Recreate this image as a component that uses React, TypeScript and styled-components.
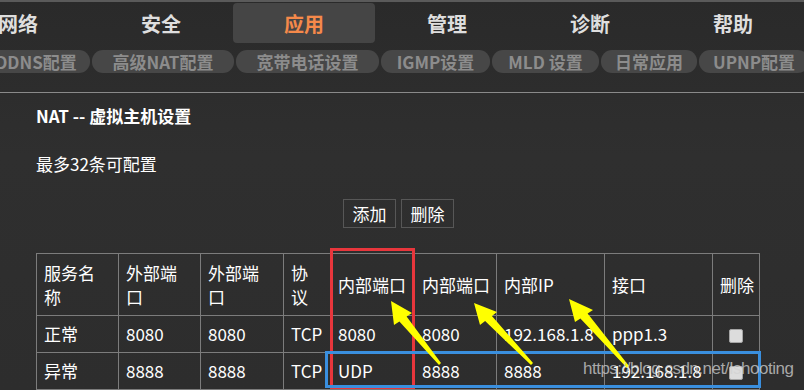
import React from 'react';
import styled, { createGlobalStyle } from 'styled-components';

const GlobalStyle = createGlobalStyle`
  html, body {
    margin: 0;
    padding: 0;
    background: #2d2d2d;
    overflow: hidden;
  }
  body {
    font-family: 'Noto Sans CJK SC', 'Noto Sans', sans-serif;
    color: #fff;
  }
`;

const Page = styled.div`
  position: relative;
  width: 804px;
  height: 390px;
  overflow: hidden;
  background: linear-gradient(180deg, #2a2a2a 0%, #2f2f2f 40%, #2d2d2d 100%);
`;

const TopLine = styled.div`
  height: 2px;
  background: #5a5a5a;
`;

const NavBar = styled.div`
  display: flex;
  height: 40px;
  margin-left: -53px;
  padding-top: 1px;
`;

const NavItem = styled.div<{ $active?: boolean }>`
  width: 142px;
  margin-right: 1px;
  flex: none;
  display: flex;
  align-items: center;
  justify-content: center;
  font-size: 20px;
  font-weight: 700;
  color: ${p => (p.$active ? '#f5894a' : '#dedede')};
  background: ${p => (p.$active ? '#454545' : 'transparent')};
  border-radius: 4px;
`;

const SubNav = styled.div`
  display: flex;
  gap: 2px;
  margin-top: 7px;
  margin-left: -18px;
  height: 23px;
`;

const Pill = styled.div<{ $w: number }>`
  width: ${p => p.$w}px;
  flex: none;
  display: flex;
  align-items: center;
  justify-content: center;
  background: #474747;
  border-radius: 11px;
  color: #8c8c8c;
  font-size: 17px;
  font-weight: 700;
  white-space: nowrap;
`;

const Divider = styled.div`
  margin-top: 19px;
  height: 1px;
  background: #8a8a8a;
`;

const Content = styled.div`
  padding: 0 0 0 36px;
`;

const Title = styled.div`
  margin-top: 11px;
  font-size: 17px;
  font-weight: 700;
  line-height: 24px;
`;

const Note = styled.div`
  margin-top: 24px;
  font-size: 17px;
  line-height: 24px;
`;

const ButtonRow = styled.div`
  display: flex;
  gap: 5px;
  padding-left: 307px;
  margin-top: 23px;
`;

const Btn = styled.button`
  width: 53px;
  height: 29px;
  padding: 0;
  background: transparent;
  border: 1px solid #575757;
  color: #fff;
  font-family: 'Noto Sans CJK SC', sans-serif;
  font-size: 17px;
  line-height: 27px;
`;

const Table = styled.table`
  margin-top: 25px;
  border-collapse: collapse;
  table-layout: fixed;
  width: 724px;
  font-size: 17px;
  color: #fff;
`;

const Th = styled.th<{ $w: number }>`
  width: ${p => p.$w - 8}px;
  height: 61px;
  padding: 0 0 0 7px;
  border: 1px solid #7c7c7c;
  text-align: left;
  font-weight: 400;
  line-height: 24px;
  vertical-align: middle;
`;

const Td = styled.td<{ $center?: boolean }>`
  height: 36px;
  padding: 0 0 0 7px;
  border: 1px solid #7c7c7c;
  line-height: 24px;
  white-space: nowrap;
  overflow: visible;
  text-align: ${p => (p.$center ? 'center' : 'left')};
`;

const Check = styled.span`
  display: inline-block;
  width: 12px;
  height: 12px;
  margin-left: -7px;
  vertical-align: middle;
  background: #dcdcdc;
  border: 1px solid #a5a5a5;
  border-radius: 2px;
`;

const Box = styled.div<{ $x: number; $y: number; $w: number; $h: number; $c: string }>`
  position: absolute;
  left: ${p => p.$x}px;
  top: ${p => p.$y}px;
  width: ${p => p.$w}px;
  height: ${p => p.$h}px;
  border: 3px solid ${p => p.$c};
  box-sizing: border-box;
  pointer-events: none;
`;

const Overlay = styled.svg`
  position: absolute;
  left: 0;
  top: 0;
  pointer-events: none;
`;

const Watermark = styled.div`
  position: absolute;
  left: 583px;
  top: 359px;
  font-family: 'Liberation Sans', Arial, sans-serif;
  font-size: 17px;
  letter-spacing: -0.5px;
  color: rgba(210, 210, 210, 0.75);
  white-space: nowrap;
  pointer-events: none;
`;

const navs = ['网络', '安全', '应用', '管理', '诊断', '帮助'];
const pills: [string, number][] = [
  ['DDNS配置', 108],
  ['高级NAT配置', 142],
  ['宽带电话设置', 143],
  ['IGMP设置', 109],
  ['MLD 设置', 107],
  ['日常应用', 96],
  ['UPNP配置', 110],
];

const headers: [string[], number][] = [
  [['服务名', '称'], 82],
  [['外部端', '口'], 82],
  [['外部端', '口'], 83],
  [['协', '议'], 47],
  [['内部端口'], 84],
  [['内部端口'], 82],
  [['内部IP'], 108],
  [['接口'], 108],
  [['删除'], 47],
];

const rows = [
  ['正常', '8080', '8080', 'TCP', '8080', '8080', '192.168.1.8', 'ppp1.3'],
  ['异常', '8888', '8888', 'TCP', 'UDP', '8888', '8888', '192.168.1.8'],
];

// tip, head corners, tail
const arrows = [
  { tip: [391, 301], a: [394, 325], b: [412, 313], tail: [440, 364] },
  { tip: [474, 303], a: [480, 325], b: [497, 312], tail: [532, 364] },
  { tip: [569, 299], a: [575, 322], b: [593, 310], tail: [628, 367] },
];

const arrowPoints = (ar: typeof arrows[number]) => {
  const [tx, ty] = ar.tip;
  const [ax, ay] = ar.a;
  const [bx, by] = ar.b;
  const [ex, ey] = ar.tail;
  // shaft starts between the head corners, narrower
  const mx = (ax + bx) / 2;
  const my = (ay + by) / 2;
  const sax = mx + (ax - mx) * 0.4;
  const say = my + (ay - my) * 0.4;
  const sbx = mx + (bx - mx) * 0.4;
  const sby = my + (by - my) * 0.4;
  return [
    [tx, ty], [ax, ay], [sax, say], [ex - 1, ey + 1], [ex + 1, ey - 1], [sbx, sby], [bx, by],
  ].map(p => p.join(',')).join(' ');
};

const App = () => {
  return (
    <Page>
      <GlobalStyle />
      <TopLine />
      <NavBar>
        {navs.map(n => (
          <NavItem key={n} $active={n === '应用'}>{n}</NavItem>
        ))}
      </NavBar>
      <SubNav>
        {pills.map(([t, w]) => (
          <Pill key={t} $w={w}>{t}</Pill>
        ))}
      </SubNav>
      <Divider />
      <Content>
        <Title>NAT -- 虚拟主机设置</Title>
        <Note>最多32条可配置</Note>
        <ButtonRow>
          <Btn>添加</Btn>
          <Btn>删除</Btn>
        </ButtonRow>
        <Table>
          <thead>
            <tr>
              {headers.map(([lines, w], i) => (
                <Th key={i} $w={w}>
                  {lines.map((l, j) => (
                    <React.Fragment key={j}>
                      {j > 0 && <br />}
                      {l}
                    </React.Fragment>
                  ))}
                </Th>
              ))}
            </tr>
          </thead>
          <tbody>
            {rows.map((r, i) => (
              <tr key={i}>
                {r.map((c, j) => (
                  <Td key={j}>{c}</Td>
                ))}
                <Td $center><Check /></Td>
              </tr>
            ))}
          </tbody>
        </Table>
      </Content>

      <Box $x={330} $y={248} $w={85} $h={141} $c="#e8363c" />
      <Box $x={325} $y={351} $w={436} $h={37} $c="#3a8fde" />
      <Overlay width={804} height={390}>
        {arrows.map((ar, i) => (
          <polygon key={i} points={arrowPoints(ar)} fill="#ffff00" />
        ))}
      </Overlay>
      <Watermark>https://blog.csdn.net/Ishooting</Watermark>
    </Page>
  );
};

export default App;
